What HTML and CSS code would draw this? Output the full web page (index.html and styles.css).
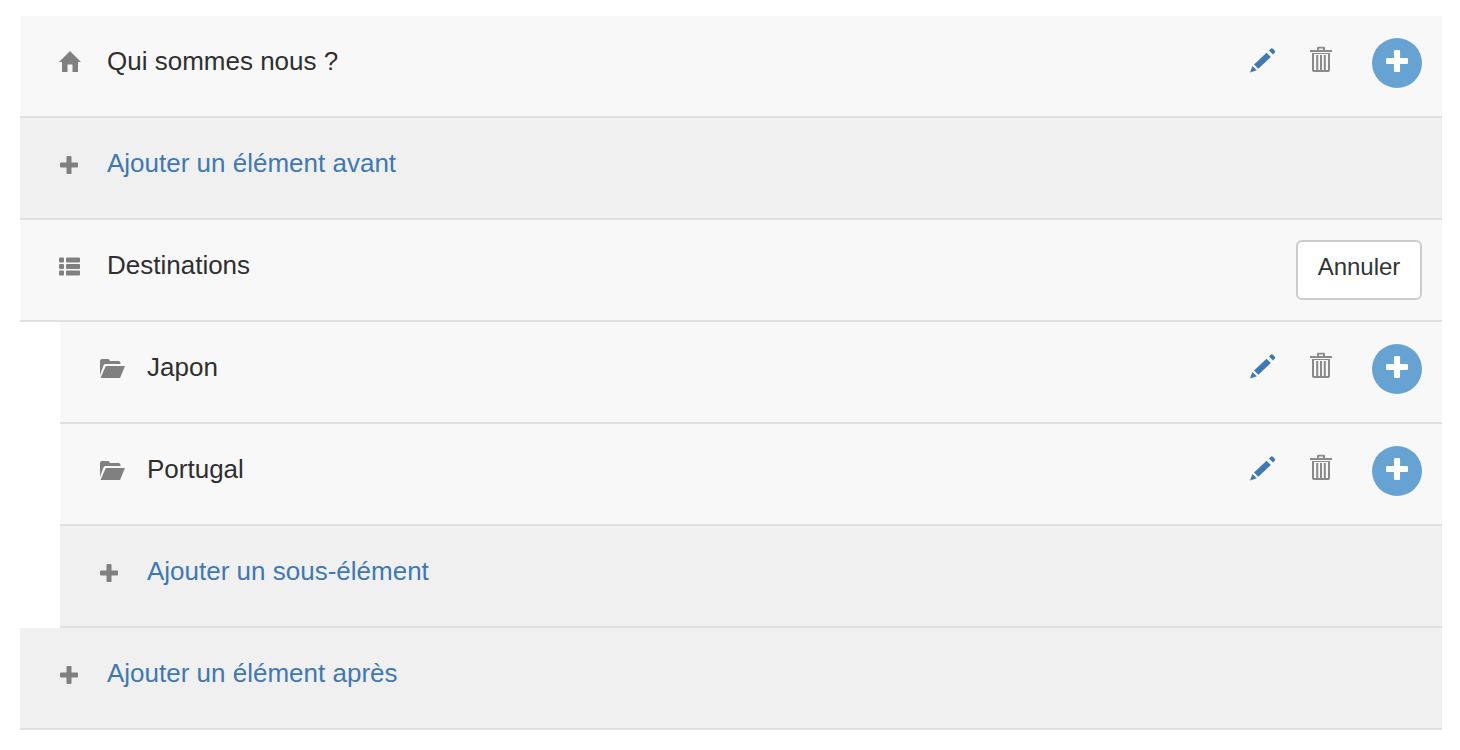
FILE: index.html
```html
<!DOCTYPE html>
<html lang="fr">
<head>
<meta charset="utf-8">
<title>Menu</title>
<link rel="stylesheet" href="styles.css">
</head>
<body>
<svg class="sprites" aria-hidden="true">
  <symbol id="pencil" viewBox="0 0 26 26">
    <path d="M0 25.500 2.400 19 6.800 23.200Z"/>
    <path d="M4 17.500 16.500 5.800 20.800 10 8.300 21.800Z"/>
    <path d="M19 3.500 21 1.600Q21.800 1 22.600 1.600L24.800 3.800Q25.400 4.600 24.800 5.400L23 7.400Z"/>
  </symbol>
  <symbol id="trash" viewBox="0 0 22 26">
    <path d="M0 4h22v2H0zM7 4V2Q7 .8 8.200 .8h5.600Q15 .8 15 2v2h-2V2.600H9V4z"/>
    <path d="M2 7h18v17.200Q20 26 18.200 26H3.800Q2 26 2 24.200zM4 8v16H18V8z"/>
    <path d="M6.200 9h2v15h-2zM10 9h2v15h-2zM13.800 9h2v15h-2z"/>
  </symbol>
  <symbol id="plus" viewBox="0 0 18 18">
    <path d="M6.500 1Q6.500 0 7.500 0h3q1 0 1 1v5.500h5.500q1 0 1 1v3q0 1-1 1h-5.500V17q0 1-1 1h-3q-1 0-1-1v-5.500H1q-1 0-1-1v-3q0-1 1-1h5.500z"/>
  </symbol>
  <symbol id="home" viewBox="0 0 22 21">
    <path d="M11 0 22 11H19V21H13.500V13.500H8.500V21H3V11H0Z"/>
  </symbol>
  <symbol id="list" viewBox="0 0 21 19">
    <path d="M0 1.500Q0 .5 1 .5h3q1 0 1 1V4.500q0 1-1 1H1q-1 0-1-1zM7 1.500q0-1 1-1h12q1 0 1 1V4.500q0 1-1 1H8q-1 0-1-1zM0 8q0-1 1-1h3q1 0 1 1v3q0 1-1 1H1q-1 0-1-1zM7 8q0-1 1-1h12q1 0 1 1v3q0 1-1 1H8q-1 0-1-1zM0 14.500q0-1 1-1h3q1 0 1 1v3q0 1-1 1H1q-1 0-1-1zM7 14.500q0-1 1-1h12q1 0 1 1v3q0 1-1 1H8q-1 0-1-1z"/>
  </symbol>
  <symbol id="folder" viewBox="0 0 25 20">
    <path d="M0 17V3Q0 1 2 1H8Q9.500 1 10 3H18.500Q20.500 3 20.500 5V6H5.500Q4.200 6 3.600 7.300L1 14Z"/>
    <path d="M5.800 8H25L20 20H0.500Z"/>
  </symbol>
</svg>

<ul class="tree">
  <li class="row">
    <span class="ico"><svg class="i-home"><use href="#home"/></svg></span>
    <span class="label">Qui sommes nous ?</span>
    <span class="actions">
      <svg class="i-pencil"><use href="#pencil"/></svg>
      <svg class="i-trash"><use href="#trash"/></svg>
      <span class="add"><svg class="i-add"><use href="#plus"/></svg></span>
    </span>
  </li>
  <li class="row row-add">
    <span class="ico"><svg class="i-plus"><use href="#plus"/></svg></span>
    <a class="label link" href="#">Ajouter un élément avant</a>
  </li>
  <li class="row">
    <span class="ico"><svg class="i-list"><use href="#list"/></svg></span>
    <span class="label">Destinations</span>
    <span class="actions"><button class="cancel" type="button">Annuler</button></span>
  </li>
  <li class="row nested">
    <span class="ico"><svg class="i-folder"><use href="#folder"/></svg></span>
    <span class="label">Japon</span>
    <span class="actions">
      <svg class="i-pencil"><use href="#pencil"/></svg>
      <svg class="i-trash"><use href="#trash"/></svg>
      <span class="add"><svg class="i-add"><use href="#plus"/></svg></span>
    </span>
  </li>
  <li class="row nested">
    <span class="ico"><svg class="i-folder"><use href="#folder"/></svg></span>
    <span class="label">Portugal</span>
    <span class="actions">
      <svg class="i-pencil"><use href="#pencil"/></svg>
      <svg class="i-trash"><use href="#trash"/></svg>
      <span class="add"><svg class="i-add"><use href="#plus"/></svg></span>
    </span>
  </li>
  <li class="row row-add nested">
    <span class="ico"><svg class="i-plus"><use href="#plus"/></svg></span>
    <a class="label link" href="#">Ajouter un sous-élément</a>
  </li>
  <li class="row row-add">
    <span class="ico"><svg class="i-plus"><use href="#plus"/></svg></span>
    <a class="label link" href="#">Ajouter un élément après</a>
  </li>
</ul>
</body>
</html>
```

FILE: styles.css
```css
* {
  box-sizing: border-box;
}

html,
body {
  height: 100%;
}

body {
  margin: 0;
  padding: 16px 18px 0 20px;
  background: #fff;
  color: #333;
  font-family: "Liberation Sans", Arial, sans-serif;
  font-size: 26px;
  overflow: hidden;
}

.sprites {
  display: none;
}

.tree {
  list-style: none;
  margin: 0;
  padding: 0;
}

.row {
  display: flex;
  align-items: flex-start;
  height: 102px;
  padding: 20px 20px 0 39px;
  background: #f8f8f8;
  border-bottom: 2px solid #e0e0e0;
}

.row-add {
  background: #f0f0f0;
}

.nested {
  margin-left: 40px;
}

.ico {
  display: flex;
  align-items: center;
  width: 48px;
  height: 50px;
  flex: none;
  fill: #808080;
}

.label {
  line-height: 50px;
  color: #2f2f2f;
}

.link {
  color: #3f78b2;
  text-decoration: none;
}

.actions {
  display: flex;
  align-items: flex-start;
  margin-left: auto;
}

.i-home {
  width: 22px;
  height: 21px;
}

.i-plus {
  width: 18px;
  height: 18px;
  margin: 3px 0 0 1px;
}

.i-list {
  width: 21px;
  height: 19px;
  margin-top: 2px;
}

.i-folder {
  width: 25px;
  height: 20px;
  margin: 2px 0 0 1px;
}

.i-pencil {
  width: 26px;
  height: 26px;
  margin-top: 11px;
  fill: #3f78b2;
}

.i-trash {
  width: 22px;
  height: 26px;
  margin: 10px 0 0 34px;
  fill: #8a8a8a;
}

.add {
  display: flex;
  align-items: center;
  justify-content: center;
  width: 50px;
  height: 50px;
  margin: 2px 0 0 40px;
  padding-bottom: 4px;
  border-radius: 50%;
  background: #66a3d2;
  fill: #fff;
}

.i-add {
  width: 22px;
  height: 22px;
}

.cancel {
  width: 126px;
  height: 60px;
  padding: 0 0 6px;
  border: 2px solid #ccc;
  border-radius: 6px;
  background: #fff;
  color: #333;
  font-family: inherit;
  font-size: 24px;
}
```
